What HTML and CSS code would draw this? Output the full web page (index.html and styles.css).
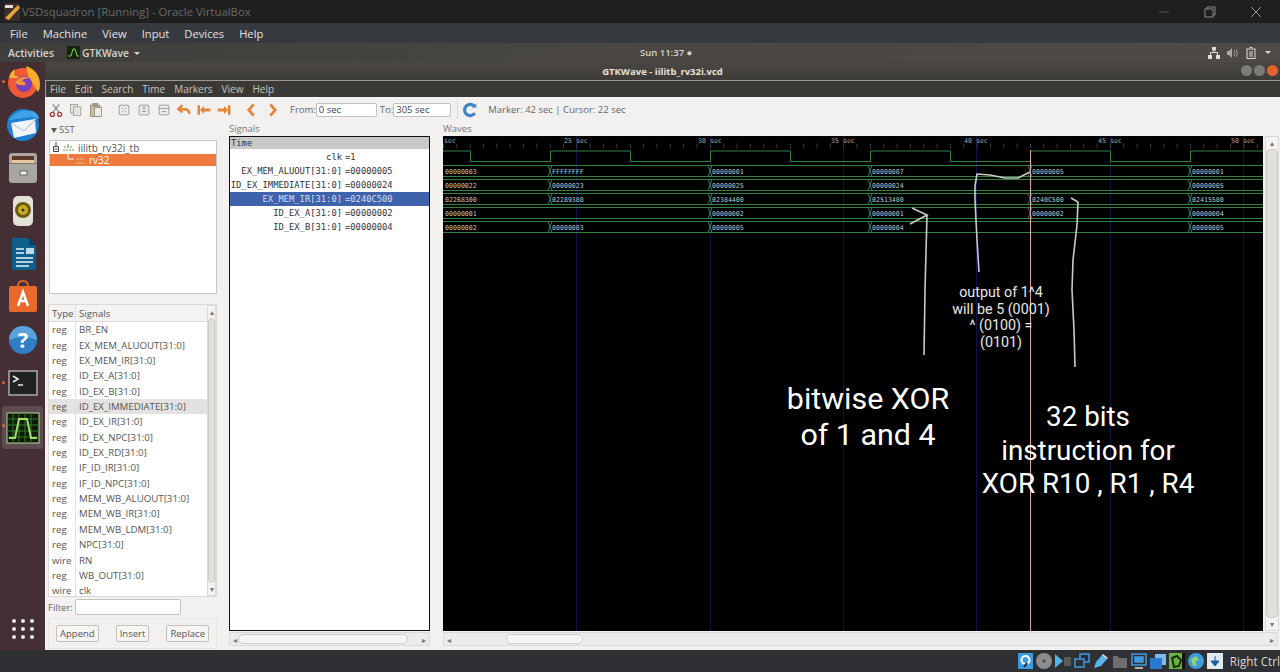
FILE: index.html
```html
<!DOCTYPE html>
<html lang="en">
<head>
  <meta charset="UTF-8" />
  <title>VSDsquadron [Running] - Oracle VirtualBox</title>
  <link rel="stylesheet" href="styles.css">
</head>
<body>
  <!-- VirtualBox host window -->
  <div class="vm-title">
    <svg class="vm-logo" width="20" height="20" viewBox="0 0 20 20"><rect x="2" y="1" width="16" height="18" rx="2" fill="#3b2f27"/><path d="M3 16 12 7l4-4 2 3-5 5-6 7z" fill="#e8a33a"/><rect x="3" y="3" width="8" height="3" fill="#ddd"/></svg>
    <span class="vm-name">VSDsquadron [Running] - Oracle VirtualBox</span>
    <div class="vm-controls">
      <svg width="14" height="14" viewBox="0 0 14 14"><path d="M2 7h10" stroke="#555"/></svg>
      <svg width="14" height="14" viewBox="0 0 14 14" fill="none" stroke="#8a8a8a"><rect x="2" y="4" width="8" height="8"/><path d="M4 4V2h8v8h-2"/></svg>
      <svg width="14" height="14" viewBox="0 0 14 14"><path d="M2 2l10 10M12 2 2 12" stroke="#9a9a9a"/></svg>
    </div>
  </div>
  <div class="vm-menu">
    <span>File</span><span>Machine</span><span>View</span><span>Input</span><span>Devices</span><span>Help</span>
  </div>

  <!-- Guest screen -->
  <div class="topbar">
    <span class="activities">Activities</span>
    <svg width="13" height="13" viewBox="0 0 13 13"><rect width="13" height="13" fill="#16240f"/><path d="M1 10h3l2-7h2l2 7h2" fill="none" stroke="#7fd04a"/></svg>
    <span class="app-name">GTKWave <i class="caret"></i></span>
    <span class="clock">Sun 11:37 ●</span>
    <div class="tray">
      <svg width="12" height="12" viewBox="0 0 12 12" fill="#ddd"><rect x="4" y="0" width="4" height="3.500"/><rect x="0" y="8" width="4" height="4"/><rect x="8" y="8" width="4" height="4"/><path d="M5.500 3h1v2H10v3H9V6H3v2H2V5h3.500z"/></svg>
      <svg width="12" height="12" viewBox="0 0 12 12"><path d="M0 4h2l3-3v10L2 8H0z" fill="#aaa"/><path d="M7 3q2 3 0 6M9 2q3 4 0 8" fill="none" stroke="#999"/></svg>
      <svg width="10" height="12" viewBox="0 0 10 12" fill="none" stroke="#ddd"><rect x="1" y="2" width="8" height="9.500"/><path d="M3.500 .5h3M3 5h4M3 7h4M3 9h4"/></svg>
      <i class="caret"></i>
    </div>
  </div>

  <div class="desktop">
    <nav class="dock">
      <div class="dock-item"><i class="dot"></i>
        <svg width="38" height="38" viewBox="0 0 38 38"><circle cx="19" cy="20" r="15" fill="#ef5a35"/><path d="M22 3q14 5 14 19 0 4-2 7L24 13z" fill="#fbab2e"/><path d="M5 15q1-6 6-9l-1 6 6 3z" fill="#fbb03b"/><circle cx="20" cy="21" r="8" fill="#7a3fb5"/><path d="M11 20q5-9 15-5-6 0-8 3 5 1 3 4-6 1-10-2z" fill="#f7913d"/></svg>
      </div>
      <div class="dock-item">
        <svg width="38" height="38" viewBox="0 0 38 38"><circle cx="19" cy="19" r="16" fill="#1f7fd0"/><path d="M5 14q8-12 24-9 6 3 6 8l-8-2z" fill="#3ea3e8"/><path d="M7 17l24-4 1 14-22 5z" fill="#f2f5f8"/><path d="M7 17l13 8 12-12" fill="none" stroke="#a9bccb"/></svg>
      </div>
      <div class="dock-item">
        <svg width="38" height="38" viewBox="0 0 38 38"><rect x="8" y="4" width="28" height="30" rx="3" transform="translate(-3)" fill="#a9a6a1"/><rect x="8" y="7" width="22" height="7" fill="#5b3a2c"/><rect x="8" y="11" width="22" height="3" fill="#e9c9a0"/><rect x="5" y="14" width="28" height="1" fill="#777"/><rect x="16" y="22" width="7" height="4" fill="#eee" stroke="#666"/></svg>
      </div>
      <div class="dock-item">
        <svg width="38" height="38" viewBox="0 0 38 38"><rect x="9" y="4" width="20" height="30" rx="5" fill="#e4e2d6"/><circle cx="19" cy="18" r="8" fill="#6b5c10"/><circle cx="19" cy="18" r="5" fill="#c6ad22"/><circle cx="19" cy="18" r="1.500" fill="#333"/></svg>
      </div>
      <div class="dock-item">
        <svg width="38" height="38" viewBox="0 0 38 38"><path d="M8 3h17l7 7v25H8z" fill="#0f5f8c"/><path d="M25 3l7 7h-7z" fill="#0a3f60"/><path d="M12 14h8M12 18h8M12 23h17M12 27h17M12 31h13" stroke="#e9f3f8" stroke-width="1.500"/><rect x="22" y="13" width="8" height="6" fill="#bcd8e6"/></svg>
      </div>
      <div class="dock-item">
        <svg width="38" height="38" viewBox="0 0 38 38"><path d="M14 8q0-5 5-5t5 5" fill="none" stroke="#d9622b" stroke-width="2"/><rect x="5" y="8" width="28" height="26" rx="2" fill="#e9692c"/><path d="M14 28l5-14 5 14M15 23h8" fill="none" stroke="#fff" stroke-width="2.500"/></svg>
      </div>
      <div class="dock-item">
        <svg width="38" height="38" viewBox="0 0 38 38"><circle cx="19" cy="19" r="14" fill="#2f7ec4"/><path d="M5 19a14 14 0 0 1 28 0q-14-6-28 0z" fill="#5ba1dc"/><text x="19" y="27" text-anchor="middle" class="help-mark">?</text></svg>
      </div>
      <div class="dock-item"><i class="dot"></i>
        <svg width="38" height="38" viewBox="0 0 38 38"><rect x="5" y="7" width="28" height="24" fill="#222" stroke="#aaa" stroke-width="1.500"/><path d="M9 12l5 3-5 3" fill="none" stroke="#eee" stroke-width="1.500"/><path d="M14 21h5" stroke="#eee" stroke-width="1.500"/></svg>
      </div>
      <div class="dock-item active"><i class="dot"></i>
        <svg width="34" height="34" viewBox="0 0 34 34"><rect x="1" y="2" width="32" height="30" fill="#0f1a0a" stroke="#b9d5a0"/><path d="M7 2v30M13 2v30M19 2v30M25 2v30M1 8h32M1 14h32M1 20h32M1 26h32" stroke="#2f7a2a"/><path d="M3 27h6l4-19h8l4 19h6" fill="none" stroke="#9fe06a" stroke-width="2"/></svg>
      </div>
      <div class="apps-grid">
        <i></i><i></i><i></i><i></i><i></i><i></i><i></i><i></i><i></i>
      </div>
    </nav>

    <main class="window">
      <div class="win-title">
        <span>GTKWave - iilitb_rv32i.vcd</span>
        <div class="win-buttons">
          <i class="wb"></i><i class="wb"></i><i class="wb close"></i>
        </div>
      </div>
      <div class="win-menu">
        <span>File</span><span>Edit</span><span>Search</span><span>Time</span><span>Markers</span><span>View</span><span>Help</span>
      </div>

      <div class="toolbar">
        <svg class="tool" viewBox="0 0 20 20" fill="none" stroke="#a33"><path d="M6 3l8 10M14 3 6 13" stroke="#888" stroke-width="1.500"/><circle cx="5.500" cy="15.500" r="2.500" stroke-width="1.500"/><circle cx="14.500" cy="15.500" r="2.500" stroke-width="1.500"/></svg>
        <svg class="tool" viewBox="0 0 20 20" fill="#e3e3e0" stroke="#9a9a96"><rect x="3" y="3" width="9" height="11"/><rect x="7" y="6" width="9" height="11"/></svg>
        <svg class="tool" viewBox="0 0 20 20" fill="#c9bda6" stroke="#8d8672"><rect x="3" y="4" width="12" height="14"/><rect x="8" y="7" width="9" height="11" fill="#ecebe7"/><rect x="6" y="2" width="6" height="3" fill="#999"/></svg>
        <span class="tool-gap"></span>
        <svg class="tool" viewBox="0 0 20 20" fill="#eee" stroke="#8c8c8c"><rect x="4" y="4" width="12" height="12" rx="1"/><path d="M7 7l2 2M13 7l-2 2M7 13l2-2M13 13l-2-2"/></svg>
        <svg class="tool" viewBox="0 0 20 20" fill="#eee" stroke="#8c8c8c"><rect x="4" y="4" width="12" height="12" rx="1"/><path d="M10 6v5M8 8l2-2 2 2M7 12h6"/></svg>
        <svg class="tool" viewBox="0 0 20 20" fill="#eee" stroke="#8c8c8c"><rect x="4" y="4" width="12" height="12" rx="1"/><path d="M4 8h12M7 12h6"/></svg>
        <svg class="tool" viewBox="0 0 20 20" fill="none" stroke="#e2853a" stroke-width="3"><path d="M8 4 3 9l5 4"/><path d="M4 9h7q5 0 6 6"/></svg>
        <svg class="tool" viewBox="0 0 20 20" fill="#e2853a"><rect x="2" y="4" width="3" height="12"/><path d="M5 10l5-5v3h8v4h-8v3z"/></svg>
        <svg class="tool" viewBox="0 0 20 20" fill="#e2853a"><rect x="15" y="4" width="3" height="12"/><path d="M15 10l-5-5v3H2v4h8v3z"/></svg>
        <span class="tool-gap"></span>
        <svg class="tool" viewBox="0 0 20 20" fill="none" stroke="#e2853a" stroke-width="3.500"><path d="M12 3l-6 7 6 7"/></svg>
        <svg class="tool" viewBox="0 0 20 20" fill="none" stroke="#e2853a" stroke-width="3.500"><path d="M8 3l6 7-6 7"/></svg>
        <label class="time-label from">From:</label><input class="time-input from-input" value="0 sec" />
        <label class="time-label">To:</label><input class="time-input to-input" value="305 sec" />
        <span class="tool-sep"></span>
        <svg class="tool refresh" viewBox="0 0 20 20" fill="none"><path d="M16 6a7 7 0 1 0 0 8" stroke="#3f86c6" stroke-width="4"/><path d="M12 7h6V2z" fill="#3f86c6"/></svg>
        <span class="marker-info">Marker: 42 sec | Cursor: 22 sec</span>
      </div>

      <div class="panes">
        <section class="left-pane">
          <div class="sst-head"><i class="tri"></i>SST</div>
          <div class="tree">
            <div class="tree-row">
              <svg width="24" height="12" viewBox="0 0 24 12" fill="none"><path d="M1.500 4.500h5v5h-5zM2.500 7h3M4 0v4.500" stroke="#444"/><path d="M12 5h8M11 8h11" stroke="#6a9a5a" stroke-dasharray="2 1"/><path d="M16 2v3" stroke="#6a9a5a"/></svg>
              iilitb_rv32i_tb
            </div>
            <div class="tree-row selected">
              <svg width="37" height="12" viewBox="0 0 37 12" fill="none"><path d="M18 0v5h6" stroke="#fff"/><path d="M27 5h7M26 9h9" stroke="#c9e0a0" stroke-dasharray="2 1"/></svg>
              rv32
            </div>
          </div>
          <div class="pane-handle"></div>
          <div class="sig-list">
            <div class="list-body">
              <div class="list-row head"><span class="c-type">Type</span><span class="c-name">Signals</span></div>
              <div class="list-row"><span class="c-type">reg</span><span class="c-name">BR_EN</span></div>
              <div class="list-row"><span class="c-type">reg</span><span class="c-name">EX_MEM_ALUOUT[31:0]</span></div>
              <div class="list-row"><span class="c-type">reg</span><span class="c-name">EX_MEM_IR[31:0]</span></div>
              <div class="list-row"><span class="c-type">reg</span><span class="c-name">ID_EX_A[31:0]</span></div>
              <div class="list-row"><span class="c-type">reg</span><span class="c-name">ID_EX_B[31:0]</span></div>
              <div class="list-row hover"><span class="c-type">reg</span><span class="c-name">ID_EX_IMMEDIATE[31:0]</span></div>
              <div class="list-row"><span class="c-type">reg</span><span class="c-name">ID_EX_IR[31:0]</span></div>
              <div class="list-row"><span class="c-type">reg</span><span class="c-name">ID_EX_NPC[31:0]</span></div>
              <div class="list-row"><span class="c-type">reg</span><span class="c-name">ID_EX_RD[31:0]</span></div>
              <div class="list-row"><span class="c-type">reg</span><span class="c-name">IF_ID_IR[31:0]</span></div>
              <div class="list-row"><span class="c-type">reg</span><span class="c-name">IF_ID_NPC[31:0]</span></div>
              <div class="list-row"><span class="c-type">reg</span><span class="c-name">MEM_WB_ALUOUT[31:0]</span></div>
              <div class="list-row"><span class="c-type">reg</span><span class="c-name">MEM_WB_IR[31:0]</span></div>
              <div class="list-row"><span class="c-type">reg</span><span class="c-name">MEM_WB_LDM[31:0]</span></div>
              <div class="list-row"><span class="c-type">reg</span><span class="c-name">NPC[31:0]</span></div>
              <div class="list-row"><span class="c-type">wire</span><span class="c-name">RN</span></div>
              <div class="list-row"><span class="c-type">reg</span><span class="c-name">WB_OUT[31:0]</span></div>
              <div class="list-row"><span class="c-type">wire</span><span class="c-name">clk</span></div>
            </div>
            <div class="vscroll thin"><i class="arrow">▴</i><i class="thumb"></i><i class="arrow">▾</i></div>
          </div>
          <div class="filter-row"><label>Filter:</label><input class="filter-input" /></div>
          <div class="btn-row">
            <button>Append</button><button>Insert</button><button>Replace</button>
          </div>
        </section>

        <section class="signals-pane">
          <div class="pane-label">Signals</div>
          <div class="signals-box">
            <div class="time-row">Time</div>
            <div class="sig-row"><span class="sig-n">clk</span><span class="sig-v">=1</span></div>
            <div class="sig-row"><span class="sig-n">EX_MEM_ALUOUT[31:0]</span><span class="sig-v">=00000005</span></div>
            <div class="sig-row"><span class="sig-n">ID_EX_IMMEDIATE[31:0]</span><span class="sig-v">=00000024</span></div>
            <div class="sig-row picked"><span class="sig-n">EX_MEM_IR[31:0]</span><span class="sig-v">=0240C500</span></div>
            <div class="sig-row"><span class="sig-n">ID_EX_A[31:0]</span><span class="sig-v">=00000002</span></div>
            <div class="sig-row"><span class="sig-n">ID_EX_B[31:0]</span><span class="sig-v">=00000004</span></div>
          </div>
          <div class="hscroll"><i class="arrow">◂</i><i class="thumb sig-thumb"></i><i class="arrow">▸</i></div>
        </section>

        <section class="waves-pane">
          <div class="pane-label">Waves</div>
          <div class="waves-row">
            <div class="waves-view">
              <svg class="wave-svg" width="820" height="495" viewBox="443 136 820 495">
                <defs>
                  <path id="tr" d="M-2 0 0 5.500-2 11M2 0 0 5.500 2 11" fill="none" stroke="#357f42"/>
                </defs>
                <!-- time grid -->
                <path d="M576.500 136v495M710.500 136v495M843.500 136v495M976.500 136v495M1110.500 136v495M1243.500 136v495" stroke="#12124a"/>
                <path d="M443 146H1263" stroke="#3a3a3a" stroke-width="5" stroke-dasharray="1 12.340"/>
                <g class="ruler">
                  <text x="444" y="143">sec</text><text x="564" y="143">25 sec</text><text x="698" y="143">30 sec</text><text x="831" y="143">35 sec</text><text x="964" y="143">40 sec</text><text x="1098" y="143">45 sec</text><text x="1231" y="143">50 sec</text>
                </g>
                <!-- clk -->
                <path d="M443 151H470.500V161.500H550.500V151H630.500V161.500H710.500V151H790.500V161.500H870.500V151H950.500V161.500H1030.500V151H1110.500V161.500H1190.500V151H1263" fill="none" stroke="#357f42"/>
                <!-- bus rows -->
                <path d="M443 165.500H1263M443 176.500H1263M443 179.500H1263M443 190.500H1263M443 193.500H1263M443 204.500H1263M443 207.500H1263M443 218.500H1263M443 221.500H1263M443 232.500H1263" stroke="#357f42"/>
                <use href="#tr" x="550" y="165.500"/><use href="#tr" x="710" y="165.500"/><use href="#tr" x="870" y="165.500"/><use href="#tr" x="1030" y="165.500"/><use href="#tr" x="1190" y="165.500"/>
                <use href="#tr" x="550" y="179.500"/><use href="#tr" x="710" y="179.500"/><use href="#tr" x="870" y="179.500"/><use href="#tr" x="1190" y="179.500"/>
                <use href="#tr" x="550" y="193.500"/><use href="#tr" x="710" y="193.500"/><use href="#tr" x="870" y="193.500"/><use href="#tr" x="1030" y="193.500"/><use href="#tr" x="1190" y="193.500"/>
                <use href="#tr" x="710" y="207.500"/><use href="#tr" x="870" y="207.500"/><use href="#tr" x="1030" y="207.500"/><use href="#tr" x="1190" y="207.500"/>
                <use href="#tr" x="550" y="221.500"/><use href="#tr" x="710" y="221.500"/><use href="#tr" x="870" y="221.500"/><use href="#tr" x="1190" y="221.500"/>
                <g class="bus-val">
                  <text x="445" y="173.500">00000003</text><text x="552" y="173.500">FFFFFFFF</text><text x="712" y="173.500">00000001</text><text x="872" y="173.500">00000007</text><text x="1032" y="173.500">00000005</text><text x="1192" y="173.500">00000001</text>
                  <text x="445" y="187.500">00000022</text><text x="552" y="187.500">00000023</text><text x="712" y="187.500">00000025</text><text x="872" y="187.500">00000024</text><text x="1192" y="187.500">00000005</text>
                  <text x="445" y="201.500">02268300</text><text x="552" y="201.500">02289380</text><text x="712" y="201.500">02384400</text><text x="872" y="201.500">02513480</text><text x="1032" y="201.500">0240C500</text><text x="1192" y="201.500">02415580</text>
                  <text x="445" y="215.500">00000001</text><text x="712" y="215.500">00000002</text><text x="872" y="215.500">00000001</text><text x="1032" y="215.500">00000002</text><text x="1192" y="215.500">00000004</text>
                  <text x="445" y="229.500">00000002</text><text x="552" y="229.500">00000003</text><text x="712" y="229.500">00000005</text><text x="872" y="229.500">00000004</text><text x="1192" y="229.500">00000005</text>
                </g>
                <!-- marker -->
                <path d="M1030.500 150V631" stroke="#e8a0a0"/>
                <!-- hand drawn arrows from the screenshot's author -->
                <g fill="none" stroke="#c8ccc8" stroke-width="1.600">
                  <path d="M924 355 925 290 927 215"/>
                  <path d="M912 208 927 215 910 224"/>
                  <path d="M979 272 977 240 975 200 975 186 977 174 990 175 1005 178 1018 178 1030 172"/>
                  <path d="M1071 198 1078 202 1077 225 1073 260 1072 290 1074 330 1075 367"/>
                </g>
              </svg>
              <div class="note small">output of 1^4<br>will be 5 (0001)<br>^ (0100) =<br>(0101)</div>
              <div class="note big xor-note">bitwise XOR<br>of 1 and 4</div>
              <div class="note big bits-note">32 bits<br>instruction for<br>XOR R10 , R1 , R4</div>
            </div>
            <div class="vscroll wide"><i class="arrow">▴</i><i class="thumb"></i><i class="arrow">▾</i></div>
          </div>
          <div class="hscroll"><i class="arrow">◂</i><i class="thumb wave-thumb"></i><i class="arrow">▸</i></div>
        </section>
      </div>
    </main>
  </div>

  <!-- VirtualBox status bar -->
  <div class="statusbar">
    <svg width="15" height="16" viewBox="0 0 15 16"><rect width="15" height="16" fill="#3f9be0"/><circle cx="7.500" cy="7" r="4" fill="none" stroke="#fff" stroke-width="2"/><path d="M6 14l3-4" stroke="#123" stroke-width="2"/></svg>
    <svg width="16" height="16" viewBox="0 0 16 16"><circle cx="8" cy="8" r="8" fill="#8c8c8c"/><circle cx="8" cy="8" r="1.500" fill="#444"/></svg>
    <svg width="16" height="16" viewBox="0 0 16 16"><rect x="9" y="4" width="7" height="9" fill="#5a5a5a"/><path d="M0 1l8 7-8 7z" fill="#55b3e6"/></svg>
    <svg width="16" height="16" viewBox="0 0 16 16" fill="#2b2f33" stroke="#3f9be0" stroke-width="1.500"><rect x="6" y="1" width="9" height="8"/><rect x="1" y="6" width="9" height="8"/></svg>
    <svg width="16" height="16" viewBox="0 0 16 16"><path d="M1 15l2-6 6-7 5 4-6 7z" fill="#5bb6ea"/><path d="M10 1l5 4-1 1-5-4z" fill="#ddeef8"/></svg>
    <svg width="16" height="16" viewBox="0 0 16 16"><path d="M1 3h5l1 2h8v10H1z" fill="#6e6e6e"/></svg>
    <svg width="16" height="16" viewBox="0 0 16 16" fill="none" stroke="#3f9be0" stroke-width="1.500"><rect x="1" y="1" width="14" height="11"/><rect x="4" y="4" width="8" height="5" fill="#3f9be0"/><path d="M4 15h8" stroke="#ddd"/></svg>
    <svg width="16" height="16" viewBox="0 0 16 16"><rect x="5" y="1" width="11" height="11" fill="#7db8ee"/><rect x="0" y="5" width="12" height="11" fill="#2a7ad0"/></svg>
    <svg width="16" height="16" viewBox="0 0 16 16"><rect width="13" height="16" fill="#6bb33a"/><rect x="13" width="3" height="16" fill="#111"/><path d="M3 5 8 3l4 4-2 6-5 1z" fill="none" stroke="#15300c" stroke-width="2"/></svg>
    <svg width="16" height="16" viewBox="0 0 16 16"><circle cx="8" cy="8" r="8" fill="#3f9be0"/><path d="M3 6l5-3 3 4-4 2 2 4-4 0z" fill="#8fd16a"/></svg>
    <svg width="16" height="16" viewBox="0 0 16 16"><rect width="16" height="16" fill="#dfe9f0"/><path d="M8 3v6M4 8h8l-4 5z" stroke="#1a5fa8" fill="#1a5fa8"/></svg>
    <span class="host-key">Right Ctrl</span>
  </div>
</body>
</html>
```
FILE: styles.css
```css
* {
  box-sizing: border-box;
  margin: 0;
  padding: 0;
}

html, body {
  width: 1280px;
  height: 672px;
  overflow: hidden;
}

body {
  display: flex;
  flex-direction: column;
  font-family: 'Open Sans', 'Noto Sans', sans-serif;
  background: #2e3033;
}

i {
  font-style: normal;
}

/* host window */
.vm-title {
  height: 23px;
  display: flex;
  align-items: center;
  background: #1e1f20;
  padding-left: 2px;
}

.vm-name {
  font-size: 11.400px;
  color: #6a6a6a;
}

.vm-controls {
  margin-left: auto;
  display: flex;
  gap: 32px;
  padding-right: 17px;
}

.vm-menu {
  height: 20px;
  display: flex;
  align-items: center;
  gap: 15px;
  padding-left: 10px;
  background: #36393e;
  color: #e2e2e2;
  font-size: 11.200px;
}

/* ubuntu top bar */
.topbar {
  height: 19px;
  display: flex;
  align-items: center;
  position: relative;
  background: linear-gradient(90deg, #3e3e3c, #4a4743 50%, #4e4b46);
  color: #d6d3cd;
  font-size: 9.500px;
  font-weight: 600;
  padding-left: 8px;
}

.activities {
  margin-right: 13px;
  font-size: 10.500px;
}

.app-name {
  margin-left: 2px;
  font-size: 10.300px;
}

.caret {
  display: inline-block;
  width: 0;
  height: 0;
  margin-left: 2px;
  vertical-align: middle;
  border: 3px solid transparent;
  border-top: 3px solid #d6d3cd;
  border-bottom: 0;
}

.clock {
  position: absolute;
  left: 640px;
}

.tray {
  margin-left: auto;
  display: flex;
  align-items: center;
  gap: 7px;
  padding-right: 9px;
}

.desktop {
  height: 588px;
  display: flex;
}

/* launcher */
.dock {
  width: 45px;
  flex: none;
  display: flex;
  flex-direction: column;
  background: #442f34;
}

.dock-item {
  height: 43px;
  flex: none;
  display: flex;
  justify-content: center;
  padding-top: 1px;
  position: relative;
}

.dock-item.active {
  align-items: center;
  padding-top: 0;
  margin: 0 2px;
  background: #5d4b4e;
  border-radius: 3px;
}

.dot {
  position: absolute;
  left: 2px;
  top: 18px;
  width: 3px;
  height: 3px;
  border-radius: 50%;
  background: #e0653a;
}

.dock-item.active .dot {
  left: 0;
}

.help-mark {
  font-size: 22px;
  font-weight: 700;
  fill: #fff;
}

.apps-grid {
  margin: auto auto 11px;
  width: 22px;
  display: grid;
  grid-template-columns: repeat(3, 4px);
  justify-content: space-between;
  row-gap: 4px;
}

.apps-grid i {
  width: 4px;
  height: 4px;
  background: #eee;
  border-radius: 50%;
}

/* gtkwave window */
.window {
  flex: 1;
  display: flex;
  flex-direction: column;
  background: #f2f1f0;
  min-width: 0;
}

.win-title {
  height: 19px;
  position: relative;
  display: flex;
  align-items: center;
  justify-content: center;
  background: linear-gradient(#4a4743, #3d3b38);
  border-bottom: 1px solid #9b9992;
  color: #e4e1dc;
  font-size: 9.500px;
  font-weight: 700;
}

.win-buttons {
  position: absolute;
  right: 2px;
  top: 3px;
  display: flex;
  gap: 2px;
}

.wb {
  width: 11px;
  height: 11px;
  border-radius: 50%;
  background: #7d7b76;
}

.wb.close {
  background: #e2632f;
}

.win-menu {
  height: 16px;
  display: flex;
  align-items: center;
  gap: 9px;
  padding-left: 4px;
  background: #3b3936;
  border-left: 1px solid #9b9992;
  color: #c9c5be;
  font-size: 10px;
}

.toolbar {
  height: 25px;
  display: flex;
  align-items: center;
  padding-left: 1px;
  font-size: 9.500px;
  color: #666;
}

.tool {
  width: 20px;
  height: 20px;
  flex: none;
  padding: 2px;
}

.tool-gap {
  width: 8px;
  flex: none;
}

.time-label.from {
  margin-left: 8px;
}

.time-input {
  height: 14px;
  border: 1px solid #c4c2bd;
  border-radius: 2px;
  background: #fff;
  color: #444;
  font: 9.500px 'Open Sans', sans-serif;
  padding-left: 2px;
  outline: none;
}

.from-input {
  width: 61px;
  margin-right: 3px;
}

.to-input {
  width: 58px;
}

.tool-sep {
  width: 1px;
  height: 18px;
  margin: 0 2px 0 6px;
  background: #dcdad6;
}

.refresh {
  margin-right: 8px;
}

/* panes */
.panes {
  height: 528px;
  display: flex;
}

.left-pane {
  width: 179px;
  flex: none;
  display: flex;
  flex-direction: column;
  padding: 0 7px 0 3px;
}

.sst-head {
  height: 18px;
  padding: 1px 0 0 3px;
  font-size: 9.500px;
  color: #666;
}

.tri {
  display: inline-block;
  width: 0;
  height: 0;
  margin-right: 2px;
  border: 3px solid transparent;
  border-top: 5px solid #555;
  border-bottom: 0;
}

.tree {
  height: 154px;
  margin-left: 1px;
  background: #fff;
  border: 1px solid #c9c7c2;
  font-size: 10px;
  color: #555;
}

.tree-row {
  height: 13px;
  display: flex;
  align-items: center;
  gap: 2px;
  white-space: nowrap;
  padding-left: 2px;
}

.tree-row.selected {
  height: 12px;
  padding-left: 0;
  background: #ef7a3f;
  color: #fff;
}

.pane-handle {
  height: 10px;
  flex: none;
}

.sig-list {
  height: 293px;
  display: flex;
  border: 1px solid #dcdad6;
  background: #fff;
}

.list-body {
  flex: 1;
  overflow: hidden;
  min-width: 0;
}

.list-row {
  height: 15.360px;
  display: flex;
  align-items: center;
  font-size: 9.700px;
  color: #555;
  white-space: nowrap;
}

.list-row.head {
  height: 17px;
  background: #f4f3f2;
  border-bottom: 1px solid #dcdad6;
}

.list-row.hover {
  background: #e4e2e0;
}

.c-type {
  width: 27px;
  height: 100%;
  flex: none;
  padding-left: 3px;
  display: flex;
  align-items: center;
  border-right: 1px solid #e3e1dd;
}

.c-name {
  padding-left: 3px;
}

.vscroll {
  display: flex;
  flex-direction: column;
  align-items: center;
  background: #f4f3f2;
  border: 1px solid #dcdad6;
  font-size: 8px;
  line-height: 12px;
  color: #777;
}

.vscroll.thin {
  width: 9px;
  flex: none;
}

.vscroll.wide {
  width: 14px;
  flex: none;
  margin-left: 2px;
}

.vscroll .thumb {
  flex: 1;
  width: 100%;
  background: #e2e0dc;
  border-radius: 4px;
  border: 1px solid #cfcdc8;
}

.filter-row {
  height: 20px;
  flex: none;
  display: flex;
  align-items: center;
  font-size: 9.500px;
  color: #666;
}

.filter-input {
  width: 106px;
  height: 16px;
  margin-left: 2px;
  border: 1px solid #c4c2bd;
  border-radius: 2px;
  background: #fff;
}

.btn-row {
  height: 31px;
  display: flex;
  align-items: center;
  justify-content: space-between;
  padding: 0 7px;
  border: 1px solid #e8e6e3;
  margin-top: 1px;
}

.btn-row button {
  height: 17px;
  padding: 0 3px;
  border: 1px solid #c4c2bd;
  border-radius: 2px;
  background: #f6f5f4;
  color: #555;
  font: 9.500px 'Open Sans', sans-serif;
}

.signals-pane {
  width: 212px;
  flex: none;
  padding: 0 6px 0 5px;
}

.waves-pane {
  flex: 1;
  min-width: 0;
  padding: 0 2px 0 7px;
}

.pane-label {
  height: 14px;
  font-size: 9.500px;
  line-height: 14px;
  color: #777;
}

.signals-box {
  height: 495px;
  border: 1px solid #111;
  background: #fff;
  font: 8.800px 'DejaVu Sans Mono', monospace;
  color: #333;
}

.time-row {
  height: 12px;
  line-height: 12px;
  padding-left: 1px;
  background: #c8c8c8;
}

.sig-row {
  height: 14px;
  display: flex;
  align-items: center;
  white-space: pre;
}

.sig-row:nth-child(2) {
  margin-top: 1px;
}

.sig-row.picked {
  background: #3f62ac;
  color: #d5def0;
}

.sig-n {
  width: 112px;
  flex: none;
  display: flex;
  justify-content: flex-end;
}

.sig-v {
  margin-left: 3px;
}

.hscroll {
  height: 14px;
  margin-top: 1px;
  display: flex;
  align-items: center;
  justify-content: space-between;
  position: relative;
  background: #ecebe9;
  border: 1px solid #dcdad6;
  font-size: 8px;
  color: #777;
  padding: 0 3px;
}

.hscroll .thumb {
  position: absolute;
  top: 1px;
  bottom: 1px;
  background: #f6f5f4;
  border: 1px solid #cfcdc8;
  border-radius: 5px;
}

.sig-thumb {
  left: 8px;
  width: 170px;
}

.wave-thumb {
  left: 62px;
  width: 77px;
}

.waves-row {
  height: 495px;
  display: flex;
}

.waves-view {
  width: 820px;
  flex: none;
  position: relative;
  background: #000;
}

.wave-svg {
  display: block;
}

.ruler text {
  font: 6.600px 'DejaVu Sans Mono', monospace;
  fill: #a8a8a8;
}

.bus-val text {
  font: 6.600px 'DejaVu Sans Mono', monospace;
  fill: #c4c8c4;
}

/* text typed on top of the capture */
.note {
  position: absolute;
  text-align: center;
  color: #fff;
  font-family: Roboto, sans-serif;
  white-space: nowrap;
  transform: translateX(-50%);
}

.note.small {
  left: 558px;
  top: 148px;
  font-size: 14.300px;
  line-height: 16.600px;
  color: #e8e8e8;
}

.xor-note {
  left: 425px;
  top: 245px;
  font-size: 30.400px;
  line-height: 35.500px;
}

.bits-note {
  left: 645px;
  top: 264px;
  font-size: 27.800px;
  line-height: 33.500px;
}

/* status bar */
.statusbar {
  height: 22px;
  display: flex;
  align-items: center;
  justify-content: flex-end;
  gap: 3px;
  background: #2e3033;
}

.host-key {
  margin-left: 4px;
  font-size: 11.700px;
  color: #d8d8d8;
  white-space: nowrap;
}
```
